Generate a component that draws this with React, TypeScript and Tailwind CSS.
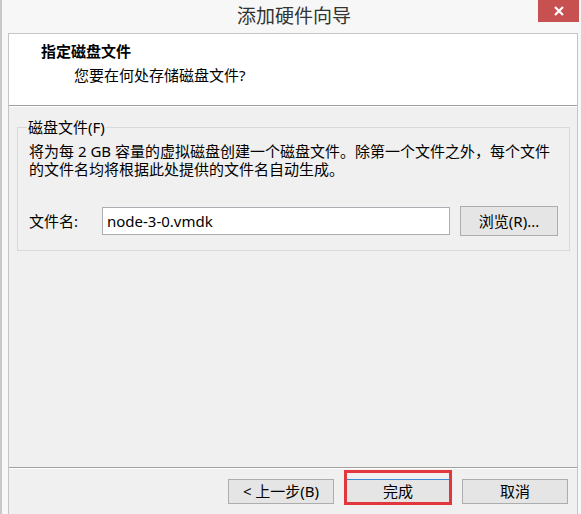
import React from 'react';

const font = "font-['Noto_Sans','Noto_Sans_CJK_SC',sans-serif]";

function WinButton({
    label,
    primary,
}: {
    label: string;
    primary?: boolean;
}) {
    return (
        <button
            className={`h-[25px] w-[106px] border bg-[#e5e5e5] text-[15px] leading-none text-black ${
                primary ? 'border-[#3c8fd6]' : 'border-[#adadad]'
            }`}
        >
            {label}
        </button>
    );
}

export default function App() {
    return (
        <div
            className={`flex h-[514px] w-[581px] overflow-hidden border-l-2 border-[#c9c9c9] bg-[#f7f7f7] ${font}`}
        >
            <div className="flex flex-1 flex-col">
                {/* title bar */}
                <div className="relative flex h-[33px] items-center justify-center pl-[4px]">
                    <span className="text-[19px] leading-none text-[#333]">
                        添加硬件向导
                    </span>
                    <div className="absolute right-[3px] top-0 flex h-[22px] w-[41px] items-center justify-center bg-[#c75050]">
                        <svg width="10" height="10" viewBox="0 0 10 10">
                            <path
                                d="M1 1L9 9M9 1L1 9"
                                stroke="white"
                                strokeWidth="2.2"
                            />
                        </svg>
                    </div>
                </div>

                <div className="ml-[6px] mr-[4px] flex flex-1 flex-col border border-b-0 border-[#c4c4c4] bg-[#f0f0f0]">
                    {/* header */}
                    <div className="flex h-[72px] flex-col border-b border-[#a0a0a0] bg-white pl-[32px] pt-[7px] text-black">
                        <div className="text-[15px] font-bold leading-[20px]">
                            指定磁盘文件
                        </div>
                        <div className="mt-[4px] pl-[33px] text-[15px] leading-[20px]">
                            您要在何处存储磁盘文件?
                        </div>
                    </div>

                    {/* body */}
                    <div className="flex flex-1 flex-col border-t border-white px-[8px] pr-[7px] pt-[10px]">
                        <fieldset className="border border-[#d9d9d9] px-[11px] pb-[14px]">
                            <legend className="-ml-[2px] px-[1px] text-[15px] leading-[20px] text-black">
                                磁盘文件(F)
                            </legend>
                            <p className="mt-[5px] text-[15px] leading-[18px] text-black">
                                将为每 2 GB 容量的虚拟磁盘创建一个磁盘文件。除第一个文件之外，每个文件
                                <br />
                                的文件名均将根据此处提供的文件名自动生成。
                            </p>
                            <div className="mt-[28px] flex items-center">
                                <span className="w-[73px] text-[15px] leading-none text-black">
                                    文件名:
                                </span>
                                <div className="flex h-[28px] w-[348px] items-center border border-[#abadb3] bg-white px-[4px] text-[15px] text-black">
                                    node-3-0.vmdk
                                </div>
                                <button className="ml-[10px] h-[30px] w-[98px] border border-[#adadad] bg-[#e5e5e5] text-[15px] leading-none text-black">
                                    浏览(R)...
                                </button>
                            </div>
                        </fieldset>
                    </div>

                    {/* footer */}
                    <div className="flex h-[47px] items-start justify-end gap-[11px] border-t border-[#a0a0a0] pr-[9px] pt-[11px] shadow-[inset_0_1px_0_#ffffff]">
                        <WinButton label="<  上一步(B)" />
                        <div className="relative">
                            <WinButton label="完成" primary />
                            <div className="pointer-events-none absolute -bottom-[1px] -left-[1px] -right-[1px] -top-[9px] border-[3px] border-[#e2383d]" />
                        </div>
                        <WinButton label="取消" />
                    </div>
                </div>
            </div>
        </div>
    );
}
